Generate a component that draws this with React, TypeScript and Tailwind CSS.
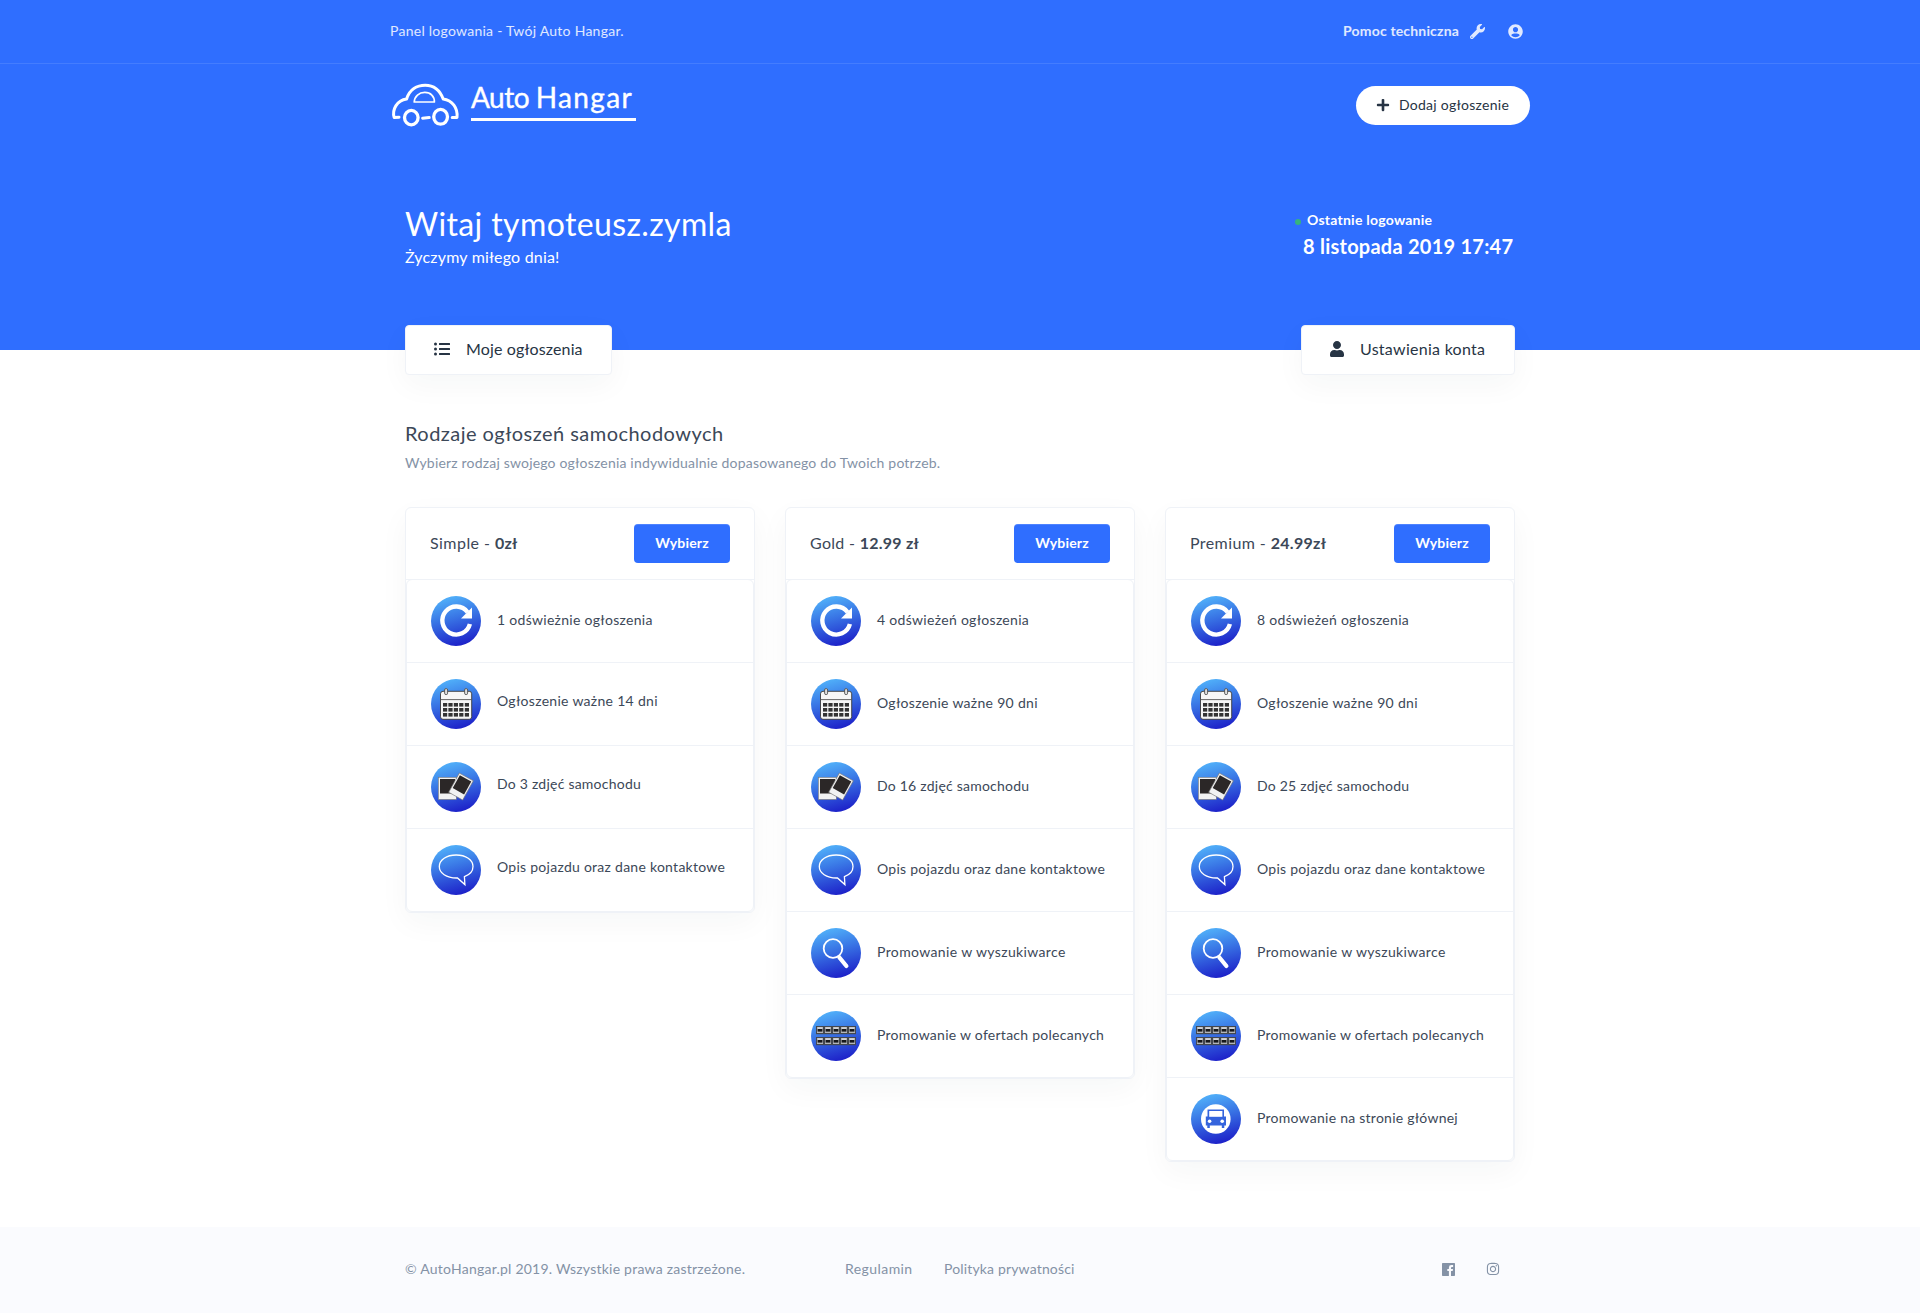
import type { ReactNode } from "react";
import { FaInstagram, FaListUl, FaPlus, FaUser, FaUserCircle, FaWrench } from "react-icons/fa";

type IconKind = "refresh" | "calendar" | "photos" | "chat" | "search" | "grid" | "car";

type Feature = { icon: IconKind; text: string; spacing: string; raised?: boolean };

type Plan = { name: string; price: string; nameSpacing: string; priceSpacing: string; features: Feature[] };

const shared: Feature[] = [
  { icon: "chat", text: "Opis pojazdu oraz dane kontaktowe", spacing: "tracking-[0.265px]" },
  { icon: "search", text: "Promowanie w wyszukiwarce", spacing: "tracking-[0.37px]" },
  { icon: "grid", text: "Promowanie w ofertach polecanych", spacing: "tracking-[0.265px]" },
];

const plans: Plan[] = [
  {
    name: "Simple - ",
    price: "0zł",
    nameSpacing: "tracking-[0.45px]",
    priceSpacing: "tracking-[0.2px]",
    features: [
      { icon: "refresh", text: "1 odświeżnie ogłoszenia", spacing: "tracking-[0.29px]" },
      { icon: "calendar", text: "Ogłoszenie ważne 14 dni", spacing: "tracking-[0.3px]", raised: true },
      { icon: "photos", text: "Do 3 zdjęć samochodu", spacing: "tracking-[0.23px]", raised: true },
      { icon: "chat", text: "Opis pojazdu oraz dane kontaktowe", spacing: "tracking-[0.265px]", raised: true },
    ],
  },
  {
    name: "Gold - ",
    price: "12.99 zł",
    nameSpacing: "tracking-[0.3px]",
    priceSpacing: "tracking-[0.25px]",
    features: [
      { icon: "refresh", text: "4 odświeżeń ogłoszenia", spacing: "tracking-[0.3px]" },
      { icon: "calendar", text: "Ogłoszenie ważne 90 dni", spacing: "tracking-[0.3px]" },
      { icon: "photos", text: "Do 16 zdjęć samochodu", spacing: "tracking-[0.23px]" },
      ...shared,
    ],
  },
  {
    name: "Premium - ",
    price: "24.99zł",
    nameSpacing: "tracking-[0.4px]",
    priceSpacing: "tracking-[0.3px]",
    features: [
      { icon: "refresh", text: "8 odświeżeń ogłoszenia", spacing: "tracking-[0.3px]" },
      { icon: "calendar", text: "Ogłoszenie ważne 90 dni", spacing: "tracking-[0.3px]" },
      { icon: "photos", text: "Do 25 zdjęć samochodu", spacing: "tracking-[0.23px]" },
      ...shared,
      { icon: "car", text: "Promowanie na stronie głównej", spacing: "tracking-[0.25px]" },
    ],
  },
];

const glyphs: Record<IconKind, ReactNode> = {
  refresh: (
    <>
      <path d="M36.6 16.2 A14 14 0 1 0 38.9 28" fill="none" stroke="#fff" strokeWidth="4.4" />
      <path d="M41 11.5 V22.5 H30 Z" fill="#fff" />
    </>
  ),
  calendar: (
    <>
      <rect x="9.5" y="12.3" width="31.2" height="28" rx="2.5" fill="#f6f6f6" stroke="#3a3a3a" strokeWidth="0.9" />
      <path d="M9.5 20.6 H40.7" stroke="#555" strokeWidth="0.9" />
      <rect x="13.6" y="9.6" width="3" height="6" rx="1.4" fill="#ddd" stroke="#444" strokeWidth="0.8" />
      <rect x="33.6" y="9.6" width="3" height="6" rx="1.4" fill="#ddd" stroke="#444" strokeWidth="0.8" />
      {[24, 29, 34].map((y) =>
        [12, 17.4, 22.8, 28.2, 33.8].map((x) => (
          <rect key={`${x}-${y}`} x={x} y={y} width="4.2" height="3.6" fill="#333" />
        )),
      )}
    </>
  ),
  photos: (
    <>
      <rect x="7.3" y="15.3" width="18" height="22.2" fill="#f2f2f2" stroke="#777" strokeWidth="0.6" />
      <rect x="9" y="17" width="15" height="14.5" fill="#2b2727" />
      <g transform="rotate(29 30 25)">
        <rect x="21.8" y="13.6" width="16" height="22" fill="#f2f2f2" stroke="#777" strokeWidth="0.6" />
        <rect x="23.3" y="15.2" width="13" height="14.8" fill="#2b2727" />
      </g>
    </>
  ),
  chat: (
    <path
      d="M25.5 33 C15.5 33 8.3 28.2 8.3 21.5 C8.3 14.8 15.6 10 25.2 10 C34.8 10 42 14.8 42 21.5 C42 26.2 38.6 29.8 33.4 31.6 L33.9 39.6 L26.5 33 Z"
      fill="none"
      stroke="#fff"
      strokeWidth="1.3"
    />
  ),
  search: (
    <>
      <circle cx="22" cy="20.5" r="9.3" fill="none" stroke="#fff" strokeWidth="1.8" />
      <path d="M28.4 29.5 L35.4 38" stroke="#fff" strokeWidth="4.2" strokeLinecap="round" />
    </>
  ),
  grid: (
    <>
      {[15, 26].map((y) =>
        [5, 13, 21, 29, 37].map((x) => (
          <g key={`${x}-${y}`}>
            <rect x={x} y={y} width="8" height="8.2" fill="#45484e" />
            <rect x={x + 1} y={y + 1} width="6" height="6" fill="#b4b6ba" />
            <rect x={x + 2} y={y + 1.6} width="4" height="1" fill="#e6e7e9" />
            <rect x={x + 1.6} y={y + 3} width="4.8" height="2.6" fill="#17181b" />
          </g>
        )),
      )}
    </>
  ),
  car: (
    <>
      <circle cx="24.8" cy="25" r="14.8" fill="#fff" />
      <path d="M16.5 15.5 H33 V22.5 H35 V31.5 H33.3 V34 H30.8 V31.5 H18.8 V34 H16.3 V31.5 H14.8 V22.5 H16.5 Z" fill="#3564dd" />
      <rect x="18.2" y="17" width="13.2" height="5.8" fill="#fff" />
      <circle cx="18.6" cy="27.3" r="1.8" fill="#fff" />
      <circle cx="31.2" cy="27.3" r="1.8" fill="#fff" />
    </>
  ),
};

function FeatureIcon({ kind }: { kind: IconKind }) {
  return (
    <div className="size-[50px] shrink-0 overflow-hidden rounded-full bg-[linear-gradient(165deg,#56befe_0%,#3a78e6_42%,#1a19c6_95%)]">
      <svg viewBox="0 0 50 50" className="size-full">
        {glyphs[kind]}
      </svg>
    </div>
  );
}

function Logo() {
  return (
    <div className="flex items-start">
      <svg viewBox="0 0 70 46" className="h-[46px] w-[70px]" fill="none" stroke="#fff" strokeLinecap="round" strokeLinejoin="round">
        <path
          d="M9 35.2 L4.2 35.6 C1.8 28 6.8 18.2 16.6 17 C19.5 7.5 27 3.2 35.2 3.2 C43.5 3.2 50 8.5 53.2 17 C62.3 18.2 68 26 67 35.4 L62.2 35.4"
          strokeWidth="3"
        />
        <path d="M24.2 20 C24.6 14.2 29 10.4 34.8 10.4 C40.6 10.4 44.5 14.2 44.4 20 Z" strokeWidth="1.7" />
        <ellipse cx="21.3" cy="35.6" rx="6.8" ry="7.2" strokeWidth="3.3" />
        <ellipse cx="50.6" cy="34.8" rx="6.9" ry="7.4" strokeWidth="3.3" />
        <path d="M32.6 36.2 L39.2 35.6" strokeWidth="3" />
      </svg>
      <div className="ml-[11px] w-[165px] border-b-[3px] border-white">
        <div className="h-9 text-[28px] leading-[30px] whitespace-pre [-webkit-text-stroke:0.4px_white]">
          <span className="tracking-[-0.5px]">Auto </span>
          <span className="tracking-[1.35px]">Hangar</span>
        </div>
      </div>
    </div>
  );
}

function PlanCard({ plan }: { plan: Plan }) {
  return (
    <div className="w-[350px] rounded-md border border-[#eff2f7] bg-white shadow-[0_10px_30px_rgba(31,45,61,0.04)]">
      <div className="flex h-[72px] items-center justify-between border-b border-[#eff2f7] px-6">
        <div className="pb-px text-base whitespace-pre text-[#3c4858]">
          <span className={plan.nameSpacing}>{plan.name}</span>
          <span className={`font-bold ${plan.priceSpacing}`}>{plan.price}</span>
        </div>
        <button className="flex h-[39px] w-24 items-center justify-center rounded bg-[#2f6eff] pb-0.5 text-sm font-bold tracking-[0.17px] text-white shadow-[inset_0_1px_0_rgba(255,255,255,0.15)]">
          Wybierz
        </button>
      </div>
      <ul className="-mt-px divide-y divide-[#eff2f7] rounded-md border border-[#eff2f7]">
        {plan.features.map((f) => (
          <li key={f.text} className="flex h-[83px] items-center pl-6 last:h-[82px]">
            <FeatureIcon kind={f.icon} />
            <span className={`ml-4 text-sm text-[#3c4858] ${f.spacing} ${f.raised ? "pb-[7px]" : "pb-[3px]"}`}>{f.text}</span>
          </li>
        ))}
      </ul>
    </div>
  );
}

export default function App() {
  return (
    <div className="min-h-[1313px] bg-white font-['Lato','Open_Sans',sans-serif]">
      <header className="h-[350px] bg-[#2f6eff] text-white">
        <div className="h-16 border-b border-white/10">
          <div className="mx-auto flex h-[62px] w-[1140px] items-center justify-between text-sm">
            <span className="tracking-[0.26px] text-white/85">Panel logowania - Twój Auto Hangar.</span>
            <div className="flex items-center pr-[7px] text-white/85">
              <span className="font-bold tracking-[0.17px]">Pomoc techniczna</span>
              <FaWrench className="ml-[11px] size-[15px]" />
              <FaUserCircle className="ml-[23px] size-[15px]" />
            </div>
          </div>
        </div>
        <nav className="mx-auto flex w-[1140px] items-start justify-between pt-[18px]">
          <Logo />
          <button className="mt-1 flex h-[39px] w-[174px] items-center rounded-full bg-white pl-5 text-sm text-[#273444]">
            <FaPlus className="size-[14px] -translate-y-px" />
            <span className="ml-[9px] pb-px tracking-[0.26px]">Dodaj ogłoszenie</span>
          </button>
        </nav>
        <div className="mx-auto flex w-[1110px] items-start justify-between pt-[75px]">
          <div>
            <h1 className="text-[32px] leading-[42px] tracking-[0.38px]">Witaj tymoteusz.zymla</h1>
            <p className="text-base leading-6 tracking-[0.18px]">Życzymy miłego dnia!</p>
          </div>
          <div className="w-[220px] pt-[7px]">
            <div className="flex items-center text-sm leading-5 font-bold tracking-[0.239px]">
              <span className="mt-[3px] mr-[6px] size-1.5 rounded-full bg-[#36b37e]" />
              Ostatnie logowanie
            </div>
            <div className="pl-2 text-xl leading-8 font-bold tracking-[0.246px]">8 listopada 2019 17:47</div>
          </div>
        </div>
      </header>

      <main className="mx-auto w-[1110px]">
        <div className="relative -mt-[25px] flex justify-between text-base text-[#273444]">
          <a className="flex h-[50px] w-[207px] items-center rounded border border-[#eff2f7] bg-white pl-7 shadow-[0_10px_30px_rgba(31,45,61,0.04)]">
            <FaListUl className="size-4 -translate-y-px" />
            <span className="ml-4 pb-[3px] tracking-[0.14px]">Moje ogłoszenia</span>
          </a>
          <a className="flex h-[50px] w-[214px] items-center rounded border border-[#eff2f7] bg-white pl-[27px] shadow-[0_10px_30px_rgba(31,45,61,0.04)]">
            <FaUser className="size-4 -translate-y-px" />
            <span className="ml-[15px] pb-[3px] tracking-[0.275px]">Ustawienia konta</span>
          </a>
        </div>

        <h2 className="mt-[43px] text-xl leading-[30px] tracking-[0.46px] text-[#3c4858]">Rodzaje ogłoszeń samochodowych</h2>
        <p className="mt-[5px] text-sm leading-5 tracking-[0.185px] text-[#8492a6]">
          Wybierz rodzaj swojego ogłoszenia indywidualnie dopasowanego do Twoich potrzeb.
        </p>

        <div className="mt-[34px] flex h-[720px] items-start gap-[30px]">
          {plans.map((p) => (
            <PlanCard key={p.name} plan={p} />
          ))}
        </div>
      </main>

      <footer className="h-[86px] bg-[#fafbfe] text-sm text-[#8492a6]">
        <div className="mx-auto flex h-[84px] w-[1110px] items-center">
          <span className="w-[440px] tracking-[0.235px]">© AutoHangar.pl 2019. Wszystkie prawa zastrzeżone.</span>
          <span className="w-[99px] tracking-[0.43px]">Regulamin</span>
          <span className="tracking-[0.16px]">Polityka prywatności</span>
          <div className="ml-auto flex items-center gap-[31px] pr-[15px]">
            <svg viewBox="0 0 13 13" className="size-[13px]" fill="currentColor">
              <path d="M0.7 0 H12.3 Q13 0 13 0.7 V12.3 Q13 13 12.3 13 H9 V8 H10.7 L11 6 H9 V4.8 Q9 3.9 10 3.9 H11.1 V2.1 H9.4 Q6.9 2.1 6.9 4.5 V6 H5.3 V8 H6.9 V13 H0.7 Q0 13 0 12.3 V0.7 Q0 0 0.7 0 Z" />
            </svg>
            <FaInstagram className="size-[14px]" />
          </div>
        </div>
      </footer>
    </div>
  );
}
